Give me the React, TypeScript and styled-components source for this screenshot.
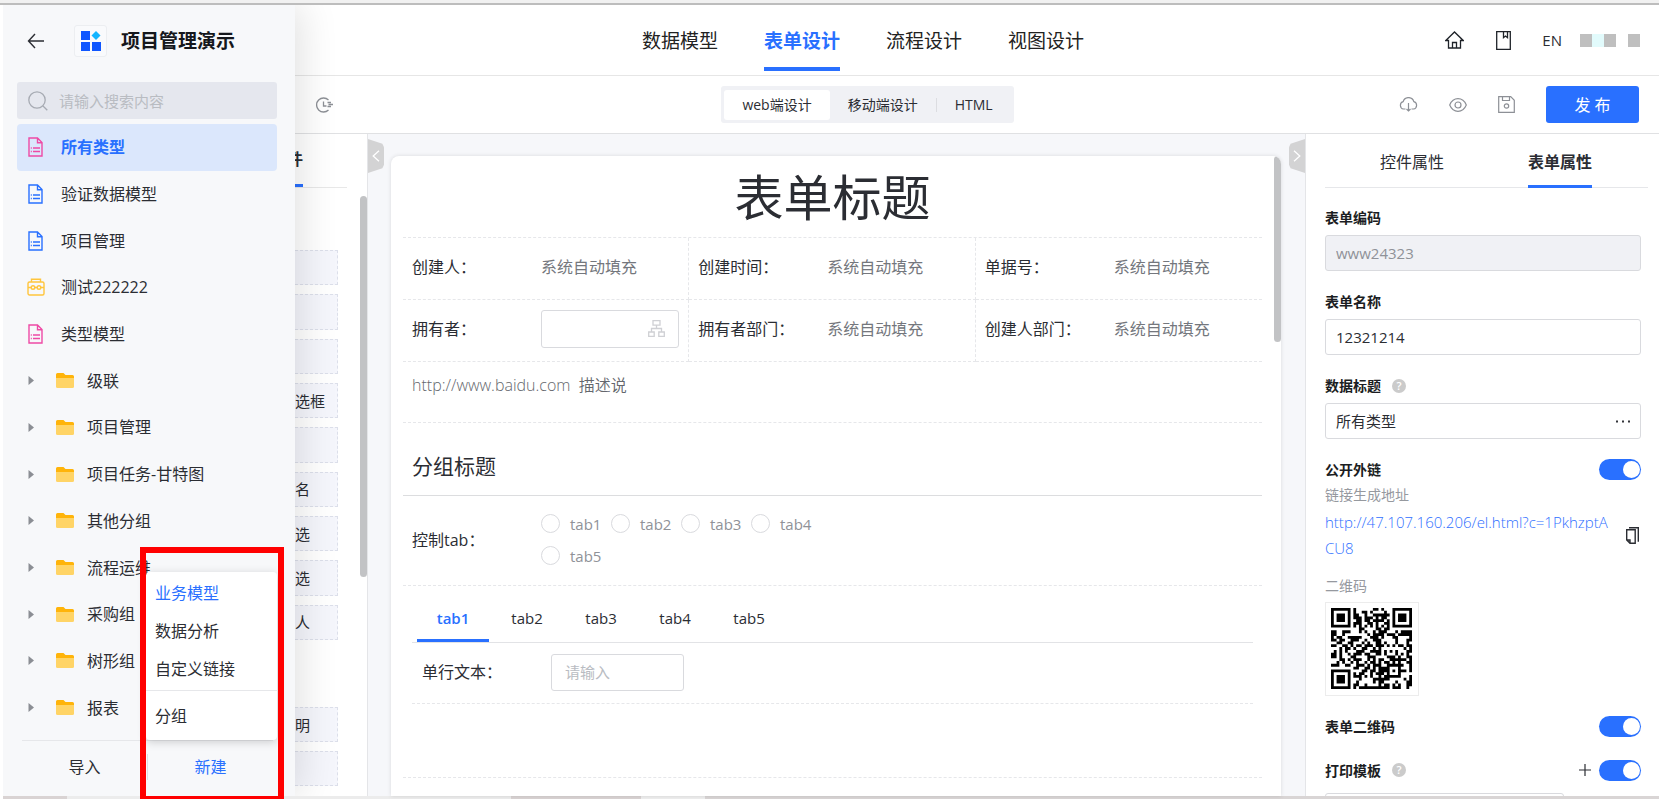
import React from "react";
import styled, { createGlobalStyle, css } from "styled-components";

const blue = "#2970ff";
const pink = "#ee4aa5";
const yellow = "#ffc53d";

const GlobalStyle = createGlobalStyle`
  *, *::before, *::after { box-sizing: border-box; }
  html, body { margin: 0; background: #fff; overflow: hidden; }
  body, button, input, select {
    font-family: "Open Sans", "Noto Sans CJK SC", sans-serif;
    font-size: 16px;
    font-weight: 400;
    line-height: 24px;
    color: #2b2d33;
  }
  button { border: 0; background: none; padding: 0; cursor: pointer; }
  ul { list-style: none; margin: 0; padding: 0; }
  h1, h2, p { margin: 0; font-weight: inherit; }
  svg { display: block; flex: none; }
`;

/* ---------- shell ---------- */

const Shell = styled.div`
  position: relative;
  display: flex;
  flex-direction: column;
  height: 100vh;
  padding-left: 3px;
  overflow: hidden;
`;

const WindowEdge = styled.div`
  flex: none;
  height: 5px;
  margin-left: -3px;
  background: #f1f1f1;
  border-bottom: 2px solid #bdbdbd;
`;

const WindowFoot = styled.div`
  flex: none;
  height: 3px;
  background: linear-gradient(90deg, #d9d3d3 64px, #ececec 64px, #ececec 508px, #d9d3d3 508px, #d9d3d3 638px, #eee 638px, #eee 702px, #d9d5d5 702px);
`;

const barGrid = css`
  flex: none;
  display: grid;
  grid-template-columns: 1fr auto 1fr;
  align-items: center;
`;

const Header = styled.header`
  ${barGrid}
  height: 71px;
  padding: 0 19px 0 83px;
  border-bottom: 1px solid #e6e6e6;
`;

const MainNav = styled.nav`
  grid-column: 2;
  display: flex;
  gap: 46px;
`;

const NavLink = styled.a<{ $active?: boolean }>`
  display: flex;
  align-items: center;
  height: 64px;
  margin-bottom: 2px;
  padding-top: 8px;
  border-bottom: 4px solid ${(p) => (p.$active ? blue : "transparent")};
  color: ${(p) => (p.$active ? blue : "#222")};
  font-size: 19px;
  font-weight: ${(p) => (p.$active ? 700 : 400)};
  text-decoration: none;
`;

const HeaderTools = styled.div`
  display: flex;
  align-items: center;
  justify-content: flex-end;
  color: #1f2329;
`;

const IconButton = styled.button<{ $gap?: number }>`
  display: flex;
  align-items: center;
  justify-content: center;
  color: inherit;
  margin-right: ${(p) => p.$gap ?? 0}px;
`;

const Language = styled.button`
  font-size: 15px;
  margin-right: 18px;
`;

const UserMask = styled.div`
  display: flex;
  height: 13px;
  margin-right: 12px;
`;

const MaskBlock = styled.span<{ $tone: string }>`
  width: 12px;
  height: 13px;
  background: ${(p) => p.$tone};
`;

const Toolbar = styled.div`
  ${barGrid}
  height: 58px;
  padding: 0 20px 0 93px;
  border-bottom: 1px solid #e0e1e3;
  color: #8d9096;
`;

const HistoryButton = styled(IconButton)`
  justify-self: start;
  margin-left: 220px;
`;

const Segments = styled.div`
  display: flex;
  align-items: center;
  height: 37px;
  padding: 4px 3px;
  border-radius: 3px;
  background: #f0f1f5;
`;

const Segment = styled.button<{ $active?: boolean }>`
  height: 30px;
  padding: 0 18px;
  border-radius: 3px;
  background: ${(p) => (p.$active ? "#fff" : "transparent")};
  font-size: 14px;
`;

const SegmentRule = styled.span`
  width: 1px;
  height: 14px;
  background: #dcdde1;
`;

const ToolActions = styled.div`
  display: flex;
  align-items: center;
  justify-content: flex-end;
`;

const Publish = styled.button`
  width: 93px;
  height: 37px;
  border-radius: 3px;
  background: ${blue};
  color: #fff;
  white-space: pre;
`;

const Workspace = styled.div`
  flex: 1;
  min-height: 0;
  display: flex;
  background: #f6f7fa;
`;

/* ---------- component palette ---------- */

const Palette = styled.aside`
  position: relative;
  flex: none;
  width: 365px;
  padding: 0 20px;
  background: #fff;
  border-right: 1px solid #e4e5e8;
  overflow: hidden;
`;

const PaletteTabs = styled.div`
  display: flex;
  justify-content: flex-end;
  height: 54px;
  border-bottom: 1px solid #e8e8e8;
`;

const PaletteTab = styled.button`
  margin-right: 44px;
  border-bottom: 3px solid ${blue};
  font-weight: 700;
`;

const PaletteGroup = styled.ul<{ $height: number; $top: number }>`
  display: grid;
  grid-auto-rows: 1fr;
  gap: 9px;
  height: ${(p) => p.$height}px;
  margin: ${(p) => p.$top}px 9px 0 172px;
`;

const PaletteItem = styled.li`
  display: flex;
  align-items: center;
  padding-left: 54px;
  border: 1px dashed #dcdfea;
  background: #f5f6fc;
  font-size: 15px;
  white-space: nowrap;
`;

const ScrollThumb = styled.span<{ $top: number; $height: number; $right: number }>`
  position: absolute;
  top: ${(p) => p.$top}px;
  right: ${(p) => p.$right}px;
  width: 7px;
  height: ${(p) => p.$height}px;
  border-radius: 4px;
  background: #c2c3c5;
`;

const Handle = styled.button<{ $side: "left" | "right" }>`
  flex: none;
  align-self: flex-start;
  display: flex;
  align-items: center;
  justify-content: center;
  width: 16px;
  height: 34px;
  margin-top: 5px;
  background: #d3d3d4;
  color: #fff;
  clip-path: ${(p) =>
    p.$side === "left"
      ? "polygon(0 0, 90% 14%, 100% 24%, 100% 76%, 90% 86%, 0 100%)"
      : "polygon(100% 0, 10% 14%, 0 24%, 0 76%, 10% 86%, 100% 100%)"};
`;

/* ---------- form canvas ---------- */

const Card = styled.main`
  position: relative;
  flex: 1;
  min-width: 0;
  margin: 22px 8px 0 7px;
  padding: 0 19px 0 12px;
  border-radius: 8px 8px 0 0;
  background: #fff;
  box-shadow: 0 0 4px rgba(0, 0, 0, 0.12);
  overflow: hidden;
`;

const dashed = "1px dashed #e6e7ea";

const FormTitle = styled.h1`
  height: 82px;
  border-bottom: ${dashed};
  font-size: 49px;
  line-height: 82px;
  text-align: center;
`;

const FieldGrid = styled.div`
  display: grid;
  grid-template-columns: repeat(3, 1fr);
`;

const Field = styled.div`
  display: flex;
  align-items: center;
  height: 62px;
  padding: 0 9px 4px;
  border-bottom: ${dashed};

  &:not(:nth-child(3n)) { border-right: ${dashed}; }
`;

const FieldLabel = styled.label`
  flex: none;
  width: 129px;
`;

const AutoValue = styled.span`
  color: #74777d;
`;

const PickerBox = styled.div`
  flex: 1;
  display: flex;
  align-items: center;
  height: 38px;
  padding-right: 13px;
  border: 1px solid #d9dade;
  border-radius: 3px;
  color: #cfd0d4;
`;

const BareInput = styled.input`
  flex: 1;
  width: 100%;
  min-width: 0;
  padding: 0;
  border: 0;
  outline: 0;
  background: none;
  font-size: 15px;

  &::placeholder { color: #b9bcc2; opacity: 1; }
`;

const Description = styled.p`
  height: 61px;
  padding: 11px 9px;
  border-bottom: ${dashed};
  color: #64676d;
  font-weight: 350;
  white-space: pre;
`;

const GroupTitle = styled.h2`
  display: flex;
  align-items: flex-end;
  height: 73px;
  padding: 0 9px 17px;
  border-bottom: 1px solid #dcdddf;
  font-size: 21px;
`;

const RadioRow = styled.div`
  display: flex;
  align-items: center;
  height: 90px;
  padding: 0 9px 2px;
  border-bottom: ${dashed};
`;

const RadioSet = styled.div`
  display: grid;
  grid-template-columns: repeat(4, 70px);
  row-gap: 10px;
`;

const RadioLabel = styled.label`
  display: flex;
  align-items: center;
  gap: 10px;
  color: #8f9298;
  font-size: 15px;
  line-height: 22px;
`;

const Radio = styled.input`
  appearance: none;
  flex: none;
  width: 19px;
  height: 19px;
  margin: 0;
  border: 1px solid #d9dade;
  border-radius: 50%;
  background: #fff;
`;

const TabBlock = styled.section`
  height: 192px;
  padding: 0 9px;
  border-bottom: ${dashed};
`;

const TabList = styled.div`
  display: flex;
  gap: 2px;
  height: 57px;
  padding: 0 5px;
  border-bottom: 1px solid #e2e3e6;
`;

const Tab = styled.button<{ $active?: boolean }>`
  width: 72px;
  padding-top: 10px;
  border-bottom: 3px solid ${(p) => (p.$active ? blue : "transparent")};
  color: ${(p) => (p.$active ? blue : "#2b2d33")};
  font-size: 15px;
  font-weight: ${(p) => (p.$active ? 600 : 400)};
`;

const TextField = styled.div`
  display: flex;
  align-items: center;
  height: 61px;
  padding: 0 10px 2px;
  border-bottom: ${dashed};
`;

const TextBox = styled.div`
  display: flex;
  width: 133px;
  height: 37px;
  padding: 0 13px;
  border: 1px solid #d9dade;
  border-radius: 3px;
`;

/* ---------- property panel ---------- */

const Properties = styled.aside`
  flex: none;
  display: flex;
  flex-direction: column;
  width: 354px;
  padding: 0 18px 0 19px;
  background: #fff;
  border-left: 1px solid #e4e5e8;
  overflow: hidden;
`;

const PropTabs = styled.div`
  flex: none;
  display: flex;
  gap: 84px;
  height: 54px;
  margin-right: -7px;
  padding-left: 55px;
  border-bottom: 1px solid #e6e7ea;
`;

const PropTab = styled.button<{ $active?: boolean }>`
  height: 54px;
  padding-top: 4px;
  border-bottom: 3px solid ${(p) => (p.$active ? blue : "transparent")};
  font-weight: ${(p) => (p.$active ? 700 : 400)};
`;

const PropField = styled.div`
  flex: none;
  display: flex;
  flex-direction: column;
  gap: 7px;
  padding-top: 19px;

  & + & { padding-top: 20px; }
`;

const PropHead = styled.div<{ $height?: number; $top?: number }>`
  flex: none;
  display: flex;
  align-items: center;
  height: ${(p) => p.$height ?? 21}px;
  padding-top: ${(p) => p.$top ?? 0}px;
`;

const PropLabel = styled.label`
  margin-right: auto;
  font-size: 14px;
  font-weight: 600;
  line-height: 21px;
  color: #1b1d22;
  display: flex;
  align-items: center;
  gap: 11px;
`;

const HelpMark = styled.span`
  width: 14px;
  height: 14px;
  border-radius: 50%;
  background: #cbcbcb;
  color: #fff;
  font-size: 11px;
  line-height: 14px;
  text-align: center;
`;

const PropBox = styled.div<{ $disabled?: boolean }>`
  display: flex;
  align-items: center;
  height: 36px;
  padding: 0 10px;
  border: 1px solid #d9dade;
  border-radius: 3px;
  background: ${(p) => (p.$disabled ? "#f0f1f5" : "#fff")};

  & input:disabled { color: #8f9298; }
`;

const Switch = styled.input`
  appearance: none;
  flex: none;
  display: flex;
  align-items: center;
  justify-content: flex-end;
  width: 42px;
  height: 21px;
  margin: 0;
  padding: 0 1px;
  border-radius: 11px;
  background: #a9acb3;
  cursor: pointer;

  &:checked { background: ${blue}; }
  &::after {
    content: "";
    width: 17px;
    height: 17px;
    border-radius: 50%;
    background: #fff;
  }
`;

const Hint = styled.p`
  flex: none;
  color: #96999f;
  font-size: 14px;
  line-height: 21px;
`;

const LinkRow = styled.div`
  flex: none;
  display: flex;
  align-items: center;
  justify-content: space-between;
  padding: 4px 2px 14px 0;
  color: #2b2d33;
`;

const PublicLink = styled.a`
  width: 288px;
  color: #3070ff;
  font-size: 15px;
  font-weight: 350;
  line-height: 26px;
  text-decoration: none;
  word-break: break-all;
`;

const QrFrame = styled.div`
  flex: none;
  width: 94px;
  height: 94px;
  margin: 6px 0 20px;
  padding: 5px;
  border: 1px solid #ececec;
`;

const TemplateBox = styled.div`
  flex: none;
  width: 239px;
  height: 35px;
  margin-top: 10px;
  border: 1px solid #d9dade;
  border-radius: 3px;
`;

/* ---------- model drawer ---------- */

const Drawer = styled.aside`
  position: absolute;
  z-index: 2;
  top: 5px;
  bottom: 3px;
  left: 3px;
  width: 292px;
  display: flex;
  flex-direction: column;
  background: #f7f8fa;
  box-shadow: 6px 0 36px rgba(0, 0, 0, 0.12);
  clip-path: inset(0 -60px 0 0);
`;

const DrawerHead = styled.div`
  flex: none;
  display: flex;
  align-items: center;
  height: 71px;
  margin-bottom: 6px;
  padding-left: 24px;
`;

const AppLogo = styled.span`
  display: flex;
  align-items: center;
  justify-content: center;
  width: 33px;
  height: 32px;
  margin: 0 14px 0 29px;
  border: 1px solid #eceef1;
  border-radius: 3px;
  background: #f9fafc;
`;

const AppName = styled.span`
  font-size: 19px;
  font-weight: 700;
  color: #15171c;
`;

const SearchBox = styled.div`
  flex: none;
  display: flex;
  align-items: center;
  gap: 11px;
  height: 37px;
  margin: 0 18px 5px 14px;
  padding: 0 11px;
  border-radius: 3px;
  background: #e5e7ee;
  color: #a7abb3;
`;

const ModelList = styled.ul`
  flex: 1;
  min-height: 0;
  display: flex;
  flex-direction: column;
  margin: 0 18px 9px 14px;
`;

const ModelItem = styled.li<{ $active?: boolean }>`
  flex: 1;
  display: flex;
  align-items: center;
  padding-left: 11px;
  border-radius: 4px;
  background: ${(p) => (p.$active ? "#dbe7fc" : "transparent")};
  color: ${(p) => (p.$active ? blue : "inherit")};
  font-weight: ${(p) => (p.$active ? 700 : 400)};
`;

const IconSlot = styled.span`
  display: flex;
  justify-content: center;
  width: 15px;
  margin-right: 18px;
`;

const FolderName = styled.span`
  margin-left: 13px;
`;

const DrawerFoot = styled.div`
  flex: none;
  display: flex;
  align-items: center;
  height: 56px;
  margin: 0 22px 0 19px;
  padding-bottom: 3px;
  border-top: 1px solid #e6e7ea;
`;

const FootButton = styled.button<{ $primary?: boolean }>`
  flex: 1;
  height: 26px;
  color: ${(p) => (p.$primary ? blue : "inherit")};

  & + & { border-left: 1px solid #dedfe3; }
`;

const CreateMenu = styled.div`
  position: absolute;
  z-index: 3;
  left: 146px;
  bottom: 59px;
  display: flex;
  flex-direction: column;
  width: 131px;
  padding: 2px 0 5px;
  border-radius: 4px;
  background: #fff;
  box-shadow: 0 2px 10px rgba(0, 0, 0, 0.18);
`;

const MenuItem = styled.button<{ $active?: boolean }>`
  height: 38px;
  padding: 0 9px 1px;
  text-align: left;
  color: ${(p) => (p.$active ? blue : "inherit")};
`;

const MenuRule = styled.hr`
  width: 100%;
  height: 1px;
  margin: 2px 0 6px;
  border: 0;
  background: #e6e7ea;
`;

const Highlight = styled.div`
  position: absolute;
  z-index: 4;
  left: 140px;
  bottom: 0;
  width: 144px;
  height: 252px;
  border: solid #ff0000;
  border-width: 6px 6px 3px;
  pointer-events: none;
`;

/* ---------- QR code (version 3, level L) ---------- */

function buildQr(text: string, mask: number): boolean[][] {
  const size = 29;
  const dataLen = 55;
  const eccLen = 15;

  const bits: number[] = [];
  const push = (value: number, n: number) => {
    for (let i = n - 1; i >= 0; i--) bits.push((value >>> i) & 1);
  };
  push(4, 4);
  push(text.length, 8);
  for (const ch of text) push(ch.charCodeAt(0), 8);
  push(0, 4);
  const data: number[] = [];
  for (let i = 0; i < bits.length; i += 8) {
    data.push(parseInt(bits.slice(i, i + 8).join("").padEnd(8, "0"), 2));
  }
  for (let pad = 0xec; data.length < dataLen; pad ^= 0xec ^ 0x11) data.push(pad);

  const mul = (x: number, y: number) => {
    let z = 0;
    for (let i = 7; i >= 0; i--) {
      z = (z << 1) ^ ((z >>> 7) * 0x11d);
      z ^= ((y >>> i) & 1) * x;
    }
    return z;
  };
  const gen = new Array(eccLen).fill(0);
  gen[eccLen - 1] = 1;
  let root = 1;
  for (let i = 0; i < eccLen; i++) {
    for (let j = 0; j < eccLen; j++) {
      gen[j] = mul(gen[j], root);
      if (j + 1 < eccLen) gen[j] ^= gen[j + 1];
    }
    root = mul(root, 2);
  }
  const ecc = new Array(eccLen).fill(0);
  for (const b of data) {
    const factor = b ^ ecc.shift();
    ecc.push(0);
    gen.forEach((g, i) => { ecc[i] ^= mul(g, factor); });
  }
  const code = [...data, ...ecc];

  const grid = Array.from({ length: size }, () => new Array(size).fill(false));
  const fixed = Array.from({ length: size }, () => new Array(size).fill(false));
  const set = (x: number, y: number, v: boolean) => {
    if (x < 0 || y < 0 || x >= size || y >= size) return;
    grid[y][x] = v;
    fixed[y][x] = true;
  };
  for (let i = 0; i < size; i++) {
    set(6, i, i % 2 === 0);
    set(i, 6, i % 2 === 0);
  }
  for (const [cx, cy] of [[3, 3], [size - 4, 3], [3, size - 4]]) {
    for (let dy = -4; dy <= 4; dy++)
      for (let dx = -4; dx <= 4; dx++) {
        const d = Math.max(Math.abs(dx), Math.abs(dy));
        set(cx + dx, cy + dy, d !== 2 && d !== 4);
      }
  }
  for (let dy = -2; dy <= 2; dy++)
    for (let dx = -2; dx <= 2; dx++)
      set(22 + dx, 22 + dy, Math.max(Math.abs(dx), Math.abs(dy)) !== 1);

  const info = (1 << 3) | mask;
  let rem = info;
  for (let i = 0; i < 10; i++) rem = (rem << 1) ^ ((rem >>> 9) * 0x537);
  const fmt = ((info << 10) | rem) ^ 0x5412;
  const bit = (i: number) => ((fmt >>> i) & 1) === 1;
  for (let i = 0; i <= 5; i++) set(8, i, bit(i));
  set(8, 7, bit(6));
  set(8, 8, bit(7));
  set(7, 8, bit(8));
  for (let i = 9; i < 15; i++) set(14 - i, 8, bit(i));
  for (let i = 0; i < 8; i++) set(size - 1 - i, 8, bit(i));
  for (let i = 8; i < 15; i++) set(8, size - 15 + i, bit(i));
  set(8, size - 8, true);

  const masks: ((x: number, y: number) => boolean)[] = [
    (x, y) => (x + y) % 2 === 0,
    (_, y) => y % 2 === 0,
    (x) => x % 3 === 0,
    (x, y) => (x + y) % 3 === 0,
    (x, y) => (Math.floor(x / 3) + Math.floor(y / 2)) % 2 === 0,
    (x, y) => ((x * y) % 2) + ((x * y) % 3) === 0,
    (x, y) => (((x * y) % 2) + ((x * y) % 3)) % 2 === 0,
    (x, y) => (((x + y) % 2) + ((x * y) % 3)) % 2 === 0,
  ];
  let n = 0;
  for (let right = size - 1; right >= 1; right -= 2) {
    if (right === 6) right = 5;
    for (let vert = 0; vert < size; vert++)
      for (let j = 0; j < 2; j++) {
        const x = right - j;
        const y = ((right + 1) & 2) === 0 ? size - 1 - vert : vert;
        if (fixed[y][x]) continue;
        const v = n < code.length * 8 && ((code[n >>> 3] >>> (7 - (n & 7))) & 1) === 1;
        grid[y][x] = v !== masks[mask](x, y);
        n++;
      }
  }
  return grid;
}

const publicUrl = "http://47.107.160.206/el.html?c=1PkhzptACU8";

function QrCode() {
  const path = buildQr(publicUrl, 4)
    .map((row, y) => row.map((on, x) => (on ? `M${x} ${y}h1v1h-1z` : "")).join(""))
    .join("");
  return (
    <svg width="81" height="81" viewBox="0 0 29 29" role="img" aria-label="二维码">
      <path d={path} fill="#000" />
    </svg>
  );
}

/* ---------- icons ---------- */

const line = { fill: "none", stroke: "currentColor" } as const;

const ArrowLeft = () => (
  <svg width="18" height="16" viewBox="0 0 18 16" {...line} strokeWidth="1.4">
    <path d="M17 8H1.5M8 1 1.5 8 8 15" />
  </svg>
);
const LogoMark = () => (
  <svg width="20" height="20" viewBox="0 0 20 20">
    <path d="M0 0h9v9H0zM0 11h9v9H0zM11 11h9v9h-9z" fill="#0f56ff" />
    <path d="M15 0l4.500 4.500L15 9l-4.500-4.500z" fill="#12b5ff" />
  </svg>
);
const SearchIcon = () => (
  <svg width="20" height="20" viewBox="0 0 20 20" {...line} strokeWidth="1.3">
    <circle cx="9" cy="9" r="8.200" />
    <path d="M15 15l4.300 4.300" />
  </svg>
);
const DocIcon = ({ color }: { color: string }) => (
  <svg width="15" height="20" viewBox="0 0 15 20" fill="none" stroke={color} strokeWidth="1.4">
    <path d="M1 1h8.500l4.500 4.500v13.500H1zM9.500 1v4.800H14M5 11h7M5 14.500h7M2.800 11h1M2.800 14.500h1" />
  </svg>
);
const CaseIcon = () => (
  <svg width="18" height="18" viewBox="0 0 18 18" fill="none" stroke={yellow} strokeWidth="1.400">
    <rect x="1" y="4" width="16" height="13" rx="1.500" />
    <path d="M4.500 4V1.200h9V4M1 9.500h3M8 9.500h2M14 9.500h3" />
    <circle cx="6" cy="9.500" r="1.800" />
    <circle cx="12" cy="9.500" r="1.800" />
  </svg>
);
const Caret = () => (
  <svg width="6" height="9" viewBox="0 0 6 9">
    <path d="M.5 0l5.500 4.500L.5 9z" fill="#8b8e94" />
  </svg>
);
const FolderIcon = () => (
  <svg width="40" height="15" viewBox="0 0 40 15">
    <path d="M22 1.500A1.500 1.500 0 0 1 23.500 0h6l2 2H38.500A1.500 1.500 0 0 1 40 3.500V8H22z" fill="#ffb40a" />
    <path d="M22 5h18v8.500a1.500 1.500 0 0 1-1.500 1.500h-15A1.500 1.500 0 0 1 22 13.500z" fill="#ffd466" />
  </svg>
);
const HistoryIcon = () => (
  <svg width="17" height="16" viewBox="0 0 17 16" {...line} strokeWidth="1.300">
    <path d="M12.500 3A7 7 0 1 0 12.500 13M7.500 4.500v4.500h3M11.500 5.500h3.500M12.500 7.500H17M11.500 9.500h3.500" />
  </svg>
);
const HomeIcon = () => (
  <svg width="19" height="18" viewBox="0 0 19 18" {...line} strokeWidth="1.300">
    <path d="M.8 9.500 9.500 1l8.700 8.500H15.500V17h-12V9.500zM7.500 17v-5.500h4V17" />
  </svg>
);
const BookIcon = () => (
  <svg width="15" height="19" viewBox="0 0 15 19" {...line} strokeWidth="1.300">
    <path d="M.7.7h13.600v17.600H.7zM7.500.7v6l2-1.600 2 1.600v-6" />
  </svg>
);
const CloudIcon = () => (
  <svg width="19" height="15" viewBox="0 0 19 15" {...line} strokeWidth="1.200">
    <path d="M6.500 12H4.500a3.800 3.800 0 0 1-.3-7.400 5.500 5.500 0 0 1 10.600 0 3.800 3.800 0 0 1-.3 7.400H12.500M9.500 6v8M7.500 12l2 2 2-2" />
  </svg>
);
const EyeIcon = () => (
  <svg width="18" height="14" viewBox="0 0 18 14" {...line} strokeWidth="1.200">
    <path d="M.7 7C2.500 2.700 5.500.7 9 .7S15.500 2.700 17.300 7C15.500 11.300 12.500 13.300 9 13.300S2.500 11.300.7 7z" />
    <circle cx="9" cy="7" r="3" />
  </svg>
);
const SaveIcon = () => (
  <svg width="17" height="17" viewBox="0 0 17 17" {...line} strokeWidth="1.200">
    <path d="M.7.7h12l3.600 3.600v12H.7zM4.500.7v3.800h7V.7" />
    <circle cx="8.500" cy="10" r="2.200" />
  </svg>
);
const OrgIcon = () => (
  <svg width="17" height="17" viewBox="0 0 17 17" {...line} strokeWidth="1.300">
    <path d="M5 .7h7v4.500H5zM.7 12h5.500v4.300H.7zM10.800 12h5.500v4.300h-5.500zM8.500 5.200v3.300M3.500 12V8.500h10V12" />
  </svg>
);
const CopyIcon = () => (
  <svg width="13" height="17" viewBox="0 0 13 17" {...line} strokeWidth="1.400">
    <path d="M.7 2.800h8.500v13.500H4L.7 13zM.7 13H4v3.300M3 .7h9.300v14" />
  </svg>
);
const PlusIcon = () => (
  <svg width="12" height="12" viewBox="0 0 12 12" {...line} strokeWidth="1.200">
    <path d="M6 0v12M0 6h12" />
  </svg>
);
const DotsIcon = () => (
  <svg width="14" height="3" viewBox="0 0 14 3">
    <path d="M0 .5h2v2H0zM6 .5h2v2H6zM12 .5h2v2h-2z" fill="#33353a" />
  </svg>
);
const Chevron = ({ left }: { left?: boolean }) => (
  <svg width="8" height="12" viewBox="0 0 8 12" {...line} strokeWidth="1.300">
    <path d={left ? "M7 .7 1.200 6 7 11.300" : "M1 .7 6.800 6 1 11.300"} />
  </svg>
);

/* ---------- content ---------- */

const models = [
  { name: "所有类型", icon: <DocIcon color={pink} />, active: true },
  { name: "验证数据模型", icon: <DocIcon color={blue} /> },
  { name: "项目管理", icon: <DocIcon color={blue} /> },
  { name: "测试222222", icon: <CaseIcon /> },
  { name: "类型模型", icon: <DocIcon color={pink} /> },
];
const folders = ["级联", "项目管理", "项目任务-甘特图", "其他分组", "流程运维", "采购组", "树形组", "报表"];
const basicParts = ["多文本", "数字", "日期型", "下拉复选框", "附件", "手写签名", "人员多选", "部门多选", "被通知人"];
const layoutParts = ["描述说明", "选项卡"];
const tabs = ["tab1", "tab2", "tab3", "tab4", "tab5"];
const autoText = "系统自动填充";

export default function App() {
  return (
    <Shell>
      <GlobalStyle />
      <WindowEdge />
      <Header>
        <MainNav>
          <NavLink href="#model">数据模型</NavLink>
          <NavLink href="#form" $active>表单设计</NavLink>
          <NavLink href="#flow">流程设计</NavLink>
          <NavLink href="#view">视图设计</NavLink>
        </MainNav>
        <HeaderTools>
          <IconButton $gap={32} aria-label="首页"><HomeIcon /></IconButton>
          <IconButton $gap={31} aria-label="手册"><BookIcon /></IconButton>
          <Language>EN</Language>
          <UserMask>
            <MaskBlock $tone="#bfbfbf" />
            <MaskBlock $tone="#e2fbfc" />
            <MaskBlock $tone="#bfbfbf" />
          </UserMask>
          <MaskBlock $tone="#bfbfbf" />
        </HeaderTools>
      </Header>
      <Toolbar>
        <HistoryButton aria-label="历史"><HistoryIcon /></HistoryButton>
        <Segments>
          <Segment $active>web端设计</Segment>
          <Segment>移动端设计</Segment>
          <SegmentRule />
          <Segment>HTML</Segment>
        </Segments>
        <ToolActions>
          <IconButton $gap={31} aria-label="下载"><CloudIcon /></IconButton>
          <IconButton $gap={31} aria-label="预览"><EyeIcon /></IconButton>
          <IconButton $gap={31} aria-label="保存"><SaveIcon /></IconButton>
          <Publish>发 布</Publish>
        </ToolActions>
      </Toolbar>

      <Workspace>
        <Palette>
          <PaletteTabs><PaletteTab>控件</PaletteTab></PaletteTabs>
          <PaletteGroup $height={390} $top={62}>
            {basicParts.map((name) => <PaletteItem key={name}>{name}</PaletteItem>)}
          </PaletteGroup>
          <PaletteGroup $height={79} $top={67}>
            {layoutParts.map((name) => <PaletteItem key={name}>{name}</PaletteItem>)}
          </PaletteGroup>
          <ScrollThumb $top={62} $height={381} $right={0} />
        </Palette>
        <Handle $side="left" aria-label="收起左侧"><Chevron left /></Handle>

        <Card>
          <FormTitle>表单标题</FormTitle>
          <FieldGrid>
            <Field><FieldLabel as="span">创建人：</FieldLabel><AutoValue>{autoText}</AutoValue></Field>
            <Field><FieldLabel as="span">创建时间：</FieldLabel><AutoValue>{autoText}</AutoValue></Field>
            <Field><FieldLabel as="span">单据号：</FieldLabel><AutoValue>{autoText}</AutoValue></Field>
            <Field>
              <FieldLabel htmlFor="owner">拥有者：</FieldLabel>
              <PickerBox><BareInput id="owner" /><OrgIcon /></PickerBox>
            </Field>
            <Field><FieldLabel as="span">拥有者部门：</FieldLabel><AutoValue>{autoText}</AutoValue></Field>
            <Field><FieldLabel as="span">创建人部门：</FieldLabel><AutoValue>{autoText}</AutoValue></Field>
          </FieldGrid>
          <Description>http://www.baidu.com  描述说</Description>
          <GroupTitle>分组标题</GroupTitle>
          <RadioRow>
            <FieldLabel as="span">控制tab：</FieldLabel>
            <RadioSet>
              {tabs.map((name) => (
                <RadioLabel key={name}><Radio type="radio" name="tab-control" />{name}</RadioLabel>
              ))}
            </RadioSet>
          </RadioRow>
          <TabBlock>
            <TabList role="tablist">
              {tabs.map((name, i) => <Tab key={name} role="tab" $active={i === 0}>{name}</Tab>)}
            </TabList>
            <TextField>
              <FieldLabel htmlFor="single">单行文本：</FieldLabel>
              <TextBox><BareInput id="single" placeholder="请输入" /></TextBox>
            </TextField>
          </TabBlock>
          <ScrollThumb $top={0} $height={186} $right={0} />
        </Card>

        <Handle $side="right" aria-label="收起右侧"><Chevron /></Handle>
        <Properties>
          <PropTabs role="tablist">
            <PropTab role="tab">控件属性</PropTab>
            <PropTab role="tab" $active>表单属性</PropTab>
          </PropTabs>
          <PropField>
            <PropLabel htmlFor="code">表单编码</PropLabel>
            <PropBox $disabled><BareInput id="code" defaultValue="www24323" disabled /></PropBox>
          </PropField>
          <PropField>
            <PropLabel htmlFor="name">表单名称</PropLabel>
            <PropBox><BareInput id="name" defaultValue="12321214" /></PropBox>
          </PropField>
          <PropField>
            <PropLabel htmlFor="title">数据标题<HelpMark>?</HelpMark></PropLabel>
            <PropBox>
              <BareInput id="title" defaultValue="所有类型" />
              <IconButton aria-label="选择"><DotsIcon /></IconButton>
            </PropBox>
          </PropField>
          <PropHead $height={45} $top={15}>
            <PropLabel htmlFor="public">公开外链</PropLabel>
            <Switch id="public" type="checkbox" role="switch" defaultChecked />
          </PropHead>
          <Hint>链接生成地址</Hint>
          <LinkRow>
            <PublicLink href={publicUrl}>{publicUrl}</PublicLink>
            <IconButton aria-label="复制"><CopyIcon /></IconButton>
          </LinkRow>
          <Hint>二维码</Hint>
          <QrFrame><QrCode /></QrFrame>
          <PropHead>
            <PropLabel htmlFor="form-qr">表单二维码</PropLabel>
            <Switch id="form-qr" type="checkbox" role="switch" defaultChecked />
          </PropHead>
          <PropHead $height={46} $top={20}>
            <PropLabel htmlFor="print">打印模板<HelpMark>?</HelpMark></PropLabel>
            <IconButton $gap={8} aria-label="添加模板"><PlusIcon /></IconButton>
            <Switch id="print" type="checkbox" role="switch" defaultChecked />
          </PropHead>
          <TemplateBox />
        </Properties>
      </Workspace>
      <WindowFoot />

      <Drawer>
        <DrawerHead>
          <IconButton aria-label="返回"><ArrowLeft /></IconButton>
          <AppLogo><LogoMark /></AppLogo>
          <AppName>项目管理演示</AppName>
        </DrawerHead>
        <SearchBox>
          <SearchIcon />
          <BareInput aria-label="搜索" placeholder="请输入搜索内容" />
        </SearchBox>
        <ModelList>
          {models.map((m) => (
            <ModelItem key={m.name} $active={m.active}><IconSlot>{m.icon}</IconSlot>{m.name}</ModelItem>
          ))}
          {folders.map((name) => (
            <ModelItem key={name}><Caret /><FolderIcon /><FolderName>{name}</FolderName></ModelItem>
          ))}
        </ModelList>
        <DrawerFoot>
          <FootButton>导入</FootButton>
          <FootButton $primary>新建</FootButton>
        </DrawerFoot>
      </Drawer>
      <CreateMenu role="menu">
        <MenuItem role="menuitem" $active>业务模型</MenuItem>
        <MenuItem role="menuitem">数据分析</MenuItem>
        <MenuItem role="menuitem">自定义链接</MenuItem>
        <MenuRule />
        <MenuItem role="menuitem">分组</MenuItem>
      </CreateMenu>
      <Highlight />
    </Shell>
  );
}
